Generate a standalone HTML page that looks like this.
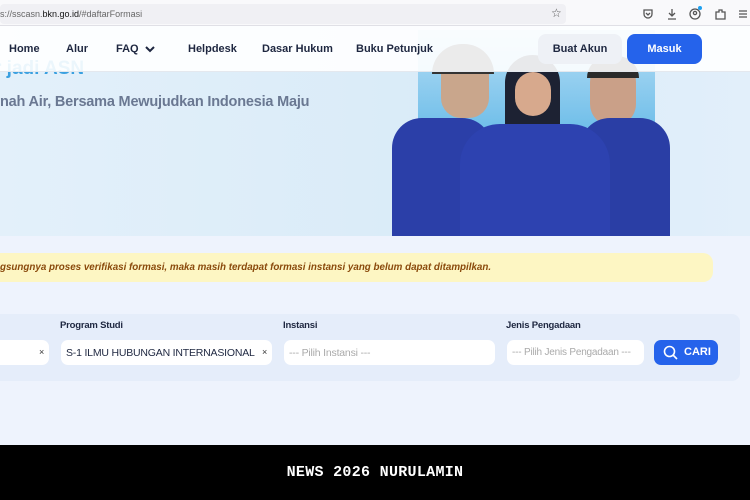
<!DOCTYPE html>
<html><head><style>
*{margin:0;padding:0;box-sizing:border-box}
body{width:750px;height:500px;overflow:hidden;position:relative;font-family:"Liberation Sans",sans-serif;background:#eef3fd}
.abs{position:absolute}
.nav a{position:absolute;top:43px;font-size:11px;font-weight:bold;color:#1e2740}
.lbl{position:absolute;top:320px;font-size:9.5px;font-weight:bold;color:#1e2740;letter-spacing:-.2px}
.inp{position:absolute;top:340px;height:25px;background:#fff;border-radius:7px;font-size:10.5px;color:#aaa;padding:7px 5px;white-space:nowrap;letter-spacing:-.2px}
</style></head><body>
<div class="abs" style="left:0;top:26px;width:750px;height:210px;background:linear-gradient(90deg,#e3f0fa,#d9ebf8 60%,#e2effa)"></div>
<div class="abs" style="left:418px;top:30px;width:237px;height:206px;background:linear-gradient(180deg,#b7def5,#4fb0e4 70%,#3aa2dc)"></div>
<div class="abs" style="left:441px;top:48px;width:48px;height:70px;border-radius:24px 24px 20px 20px;background:#c9a68c"></div>
<div class="abs" style="left:432px;top:44px;width:62px;height:30px;border-radius:30px 30px 0 0;background:#333"></div>
<div class="abs" style="left:505px;top:55px;width:55px;height:90px;border-radius:28px 28px 12px 12px;background:#1d2233"></div>
<div class="abs" style="left:515px;top:72px;width:36px;height:44px;border-radius:18px;background:#d7a98d"></div>
<div class="abs" style="left:590px;top:60px;width:46px;height:66px;border-radius:22px;background:#caa088"></div>
<div class="abs" style="left:587px;top:56px;width:52px;height:22px;border-radius:26px 26px 0 0;background:#2b2b2b"></div>
<div class="abs" style="left:392px;top:118px;width:100px;height:118px;border-radius:30px 30px 0 0;background:#2b3fa8"></div>
<div class="abs" style="left:580px;top:118px;width:90px;height:118px;border-radius:30px 30px 0 0;background:#2a3ea5"></div>
<div class="abs" style="left:460px;top:124px;width:150px;height:112px;border-radius:40px 40px 0 0;background:#2d42b0"></div>
<div class="abs" style="left:-6px;top:58px;font-size:19px;font-weight:bold;color:#3aa0e0">r jadi ASN</div>
<div class="abs" style="left:0;top:94px;font-size:14.5px;font-weight:bold;color:#6a7892;letter-spacing:-.2px">nah Air, Bersama Mewujudkan Indonesia Maju</div>
<div class="abs" style="left:0;top:26px;width:750px;height:46px;background:rgba(255,255,255,.9);border-bottom:1px solid #e4e8ee"></div>
<div class="nav">
<a style="left:9px">Home</a><a style="left:66px">Alur</a><a style="left:116px">FAQ</a>
<svg class="abs" style="left:144px;top:44px" width="12" height="10" viewBox="0 0 12 10"><path d="M2 3l4 4 4-4" stroke="#1e2740" stroke-width="2" fill="none"/></svg>
<a style="left:188px">Helpdesk</a><a style="left:262px">Dasar Hukum</a><a style="left:356px">Buku Petunjuk</a>
</div>
<div class="abs" style="left:538px;top:34px;width:84px;height:30px;border-radius:8px;background:#eef1f6;font-size:11px;font-weight:bold;color:#1e2740;text-align:center;line-height:30px">Buat Akun</div>
<div class="abs" style="left:627px;top:34px;width:75px;height:30px;border-radius:8px;background:#2563eb;font-size:11px;font-weight:bold;color:#fff;text-align:center;line-height:30px">Masuk</div>
<div class="abs" style="left:0;top:0;width:750px;height:26px;background:#f9f9fb;border-bottom:1px solid #e0e0e6"></div>
<div class="abs" style="left:0;top:4px;width:566px;height:20px;background:#f0f0f4;border-radius:4px"></div>
<div class="abs" style="left:0;top:9px;font-size:9px;color:#666">s://sscasn.<span style="color:#111">bkn.go.id</span>/#daftarFormasi</div>
<div class="abs" style="left:551px;top:6px;font-size:12px;color:#555">☆</div>
<svg class="abs" style="left:640px;top:7px" width="110" height="14" viewBox="0 0 110 14" fill="none" stroke="#555" stroke-width="1.3">
<path d="M4 3h8v4a4 4 0 0 1-8 0z M6 6l2 2 2-2"/>
<path d="M32 2v7 M29 6l3 3 3-3 M28 12h8"/>
<circle cx="55" cy="7" r="5"/><circle cx="55" cy="6" r="1.6"/>
<path d="M76 12V5h3V3h3v2h3v7z"/>
<path d="M99 4h8 M99 7h8 M99 10h8"/>
</svg>
<div class="abs" style="left:698px;top:6px;width:4px;height:4px;border-radius:50%;background:#1ea0f0"></div>
<div class="abs" style="left:0;top:253px;width:713px;height:29px;background:#fdf6c3;border-radius:0 10px 10px 0"></div>
<div class="abs" style="left:0;top:262px;font-size:9.8px;font-weight:bold;font-style:italic;color:#8a4a0c">gsungnya proses verifikasi formasi, maka masih terdapat formasi instansi yang belum dapat ditampilkan.</div>
<div class="abs" style="left:0;top:314px;width:740px;height:67px;background:#e5edfa;border-radius:0 8px 8px 0"></div>
<div class="lbl" style="left:60px">Program Studi</div>
<div class="lbl" style="left:283px">Instansi</div>
<div class="lbl" style="left:506px">Jenis Pengadaan</div>
<div class="inp" style="left:0;width:49px;border-radius:0 7px 7px 0"><span class="abs" style="right:5px;top:7px;color:#333;font-size:9px">×</span></div>
<div class="inp" style="left:61px;width:211px;color:#1e2740">S-1 ILMU HUBUNGAN INTERNASIONAL<span class="abs" style="right:5px;top:7px;color:#333;font-size:9px;background:#fff">×</span></div>
<div class="inp" style="left:284px;width:211px">--- Pilih Instansi ---</div>
<div class="inp" style="left:507px;width:137px;font-size:10px">--- Pilih Jenis Pengadaan ---</div>
<div class="abs" style="left:654px;top:340px;width:64px;height:25px;border-radius:7px;background:#2563eb;color:#fff;font-size:11px;font-weight:bold;line-height:25px;padding-left:30px">CARI</div>
<svg class="abs" style="left:663px;top:345px" width="15" height="15" viewBox="0 0 15 15" fill="none" stroke="#fff" stroke-width="1.6"><circle cx="6.5" cy="6.5" r="5"/><path d="M10 10l4 4"/></svg>
<div class="abs" style="left:0;top:445px;width:750px;height:55px;background:#000;color:#fff;font-family:'Liberation Mono',monospace;font-size:15px;font-weight:bold;text-align:center;line-height:55px;letter-spacing:.3px">NEWS 2026 NURULAMIN</div>
</body></html>
